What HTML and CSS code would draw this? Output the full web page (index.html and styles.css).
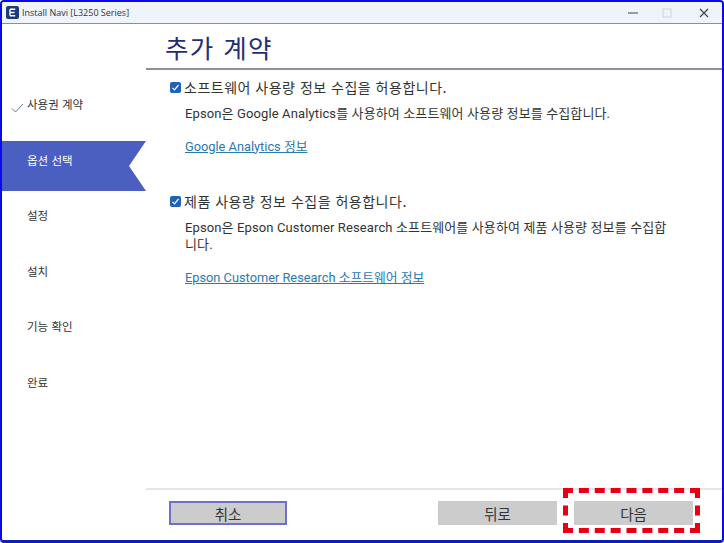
FILE: index.html
```html
<!DOCTYPE html>
<html lang="ko">
<head>
    <meta charset="UTF-8">
    <title>Install Navi [L3250 Series]</title>
    <link rel="stylesheet" href="styles.css">
</head>
<body>
    <div class="window">
        <div class="titlebar">
            <svg class="app-icon" width="13" height="13" viewBox="0 0 13 13">
                <rect width="13" height="13" rx="2" fill="#1f3a7a"/>
                <path d="M4 3.2h5.2M4 6.5h4.6M4 9.8h5.2M4 3.2v6.6" stroke="#fff" stroke-width="1.4" fill="none"/>
            </svg>
            <span class="app-title">Install Navi [L3250 Series]</span>
            <div class="window-buttons">
                <svg width="10" height="10" viewBox="0 0 10 10"><path d="M0 5h10" stroke="#444" stroke-width="1.2"/></svg>
                <svg width="10" height="10" viewBox="0 0 10 10"><rect x="1" y="1" width="8" height="8" fill="none" stroke="#ccd2d8"/></svg>
                <svg width="10" height="10" viewBox="0 0 10 10"><path d="M1 1l8 8M9 1l-8 8" stroke="#444" stroke-width="1.2"/></svg>
            </div>
        </div>
        <div class="body">
            <div class="sidebar">
                <div class="step done">
                    <svg class="check" width="13" height="10" viewBox="0 0 13 10"><path d="M1 5.5l3.5 3.5L12 1" stroke="#6a7590" stroke-width="1" fill="none"/></svg>
                    사용권 계약
                </div>
                <div class="step active">
                    옵션 선택
                    <svg class="notch" width="17" height="50" viewBox="0 0 17 50"><polygon points="0,0 17,0 0,25 17,50 0,50" fill="#4a5fc0"/></svg>
                </div>
                <div class="step">설정</div>
                <div class="step">설치</div>
                <div class="step">기능 확인</div>
                <div class="step">완료</div>
            </div>
            <div class="main">
                <h1 class="heading">추가 계약</h1>
                <div class="content">
                    <div class="option">
                        <label class="check-row"><span class="checkbox"><svg width="9" height="9" viewBox="0 0 9 9"><path d="M1.5 4.8l2 2L7.5 2" stroke="#fff" stroke-width="1.2" fill="none"/></svg></span>소프트웨어 사용량 정보 수집을 허용합니다.</label>
                        <p class="desc">Epson은 Google Analytics를 사용하여 소프트웨어 사용량 정보를 수집합니다.</p>
                        <a class="link" href="#">Google Analytics 정보</a>
                    </div>
                    <div class="option">
                        <label class="check-row"><span class="checkbox"><svg width="9" height="9" viewBox="0 0 9 9"><path d="M1.5 4.8l2 2L7.5 2" stroke="#fff" stroke-width="1.2" fill="none"/></svg></span>제품 사용량 정보 수집을 허용합니다.</label>
                        <p class="desc">Epson은 Epson Customer Research 소프트웨어를 사용하여 제품 사용량 정보를 수집합니다.</p>
                        <a class="link" href="#">Epson Customer Research 소프트웨어 정보</a>
                    </div>
                </div>
                <div class="footer">
                    <button class="btn btn-cancel">취소</button>
                    <div class="footer-right">
                        <button class="btn">뒤로</button>
                        <button class="btn">다음</button>
                    </div>
                </div>
            </div>
        </div>
    </div>
    <div class="highlight"></div>
</body>
</html>
```

FILE: styles.css
```css
html, body {
    margin: 0;
    padding: 0;
}

body {
    width: 724px;
    height: 543px;
    overflow: hidden;
    position: relative;
    font-family: "Noto Sans CJK KR", "Open Sans", sans-serif;
    background-color: #ffffff;
    color: #333333;
}

.window {
    box-sizing: border-box;
    width: 724px;
    height: 543px;
    border: 2px solid #0a0ae6;
    border-bottom: 3px solid #0c1fb0;
    border-radius: 4px;
    display: flex;
    flex-direction: column;
    overflow: hidden;
}

.titlebar {
    height: 21px;
    background-color: #eef4fa;
    border-bottom: 1px solid #8a8f99;
    display: flex;
    align-items: center;
    padding-left: 4px;
    flex-shrink: 0;
}

.app-title {
    font-family: "Open Sans", sans-serif;
    font-size: 9px;
    margin-left: 3px;
    color: #333333;
}

.window-buttons {
    margin-left: auto;
    display: flex;
    gap: 25px;
    padding-right: 13px;
}

.window-buttons svg:first-child {
    margin-right: -1px;
}

.window-buttons svg:nth-child(2) {
    margin-right: 2px;
}

.body {
    flex: 1;
    display: flex;
}

.sidebar {
    width: 144px;
    flex-shrink: 0;
    padding-top: 61px;
}

.step {
    height: 50px;
    margin-bottom: 5.6px;
    padding-left: 25px;
    padding-top: 11px;
    box-sizing: border-box;
    font-size: 11.5px;
    line-height: 16px;
    position: relative;
    color: #333333;
}

.step.done .check {
    position: absolute;
    left: 9px;
    top: 18px;
}

.step.active {
    background-color: #4a5fc0;
    color: #ffffff;
    width: 127px;
}

.notch {
    position: absolute;
    left: 127px;
    top: 0;
}

.main {
    flex: 1;
    display: flex;
    flex-direction: column;
}

.heading {
    margin: 0;
    height: 46px;
    box-sizing: border-box;
    border-bottom: 2px solid #8a919c;
    padding-left: 19px;
    padding-top: 6px;
    font-size: 25.5px;
    font-weight: 400;
    line-height: 34px;
    letter-spacing: 1.4px;
    color: #1f3070;
}

.content {
    flex: 1;
    padding: 8px 46px 0 24px;
}

.option {
    margin-bottom: 36.5px;
}

.check-row {
    display: flex;
    align-items: center;
    height: 18px;
    font-size: 14px;
    letter-spacing: 0.5px;
    color: #333333;
}

.checkbox {
    width: 11px;
    height: 11px;
    background-color: #1e63b4;
    border-radius: 2px;
    margin-right: 3px;
    display: flex;
    align-items: center;
    justify-content: center;
}

.desc {
    margin: 8.5px 0 0 15px;
    font-family: "Roboto", "Noto Sans CJK KR", sans-serif;
    font-size: 13px;
    line-height: 17px;
    letter-spacing: 0.12px;
    word-break: break-all;
    color: #333333;
}

.link {
    display: inline-block;
    margin: 16px 0 0 15px;
    font-family: "Roboto", "Noto Sans CJK KR", sans-serif;
    font-size: 12.8px;
    line-height: 18px;
    color: #2a7ab0;
}

.footer {
    height: 52px;
    box-sizing: border-box;
    border-top: 2px solid #e6e6e6;
    display: flex;
    align-items: flex-start;
    padding: 11px 29px 0 23px;
}

.footer-right {
    margin-left: auto;
    display: flex;
    gap: 17px;
}

.btn {
    box-sizing: border-box;
    width: 119px;
    height: 24px;
    border: none;
    background-color: #cccccc;
    font-family: "Noto Sans CJK KR", sans-serif;
    font-size: 14.5px;
    color: #333333;
    padding: 0;
}

.btn-cancel {
    width: 118px;
    border: 2px solid #6f6fd0;
}

.highlight {
    position: absolute;
    left: 563px;
    top: 488px;
    width: 127px;
    height: 35px;
    border: 5px dashed #e60012;
}
```
